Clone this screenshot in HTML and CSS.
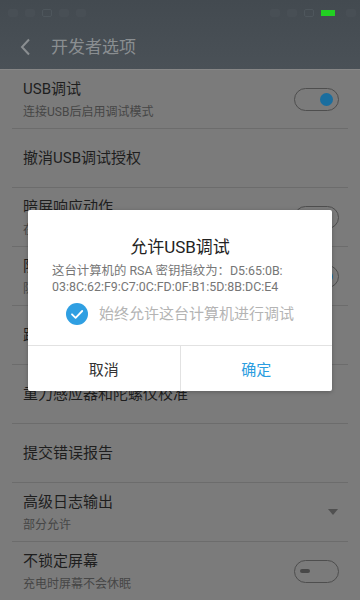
FILE: index.html
```html
<!DOCTYPE html>
<html lang="zh-CN">
<head>
<meta charset="utf-8">
<title>开发者选项</title>
<link rel="stylesheet" href="styles.css">
</head>
<body>
<div class="screen">
  <header class="appbar">
    <div class="statusbar">
      <div class="sb-left">
        <span class="sb-ico"></span><span class="sb-ico"></span><span class="sb-ico sq"></span><span class="sb-ico"></span><span class="sb-ico"></span>
      </div>
      <div class="sb-right">
        <span class="sb-ico"></span><span class="sb-ico"></span><span class="sb-ico sq"></span>
        <span class="battery"></span>
        <span class="sb-ico"></span>
      </div>
    </div>
    <div class="toolbar">
      <svg class="back" width="12" height="18" viewBox="0 0 12 18"><path d="M10 1.5 L3 9 L10 16.5" fill="none" stroke="#8a8e91" stroke-width="2"/></svg>
      <span class="title">开发者选项</span>
    </div>
  </header>

  <ul class="list">
    <li class="row">
      <div class="texts"><div class="t">USB调试</div><div class="s">连接USB后启用调试模式</div></div>
      <span class="switch on"></span>
    </li>
    <li class="row">
      <div class="texts"><div class="t">撤消USB调试授权</div></div>
    </li>
    <li class="row">
      <div class="texts"><div class="t">暗屏响应动作</div><div class="s">在暗屏状态下响应手势动作</div></div>
      <span class="switch"></span>
    </li>
    <li class="row">
      <div class="texts"><div class="t">防误触模式</div><div class="s">防止口袋中误触屏幕</div></div>
      <span class="switch on"></span>
    </li>
    <li class="row">
      <div class="texts"><div class="t">跳过开机向导</div></div>
    </li>
    <li class="row">
      <div class="texts"><div class="t">重力感应器和陀螺仪校准</div></div>
    </li>
    <li class="row">
      <div class="texts"><div class="t">提交错误报告</div></div>
    </li>
    <li class="row">
      <div class="texts"><div class="t">高级日志输出</div><div class="s">部分允许</div></div>
      <span class="caret"></span>
    </li>
    <li class="row">
      <div class="texts"><div class="t">不锁定屏幕</div><div class="s">充电时屏幕不会休眠</div></div>
      <span class="switch off"></span>
    </li>
  </ul>

  <div class="overlay">
    <div class="dialog">
      <div class="d-title">允许USB调试</div>
      <div class="d-body">这台计算机的 RSA 密钥指纹为：D5:65:0B:<br>03:8C:62:F9:C7:0C:FD:0F:B1:5D:8B:DC:E4</div>
      <div class="d-check">
        <svg class="check" width="22" height="22" viewBox="0 0 22 22"><circle cx="11" cy="11" r="11" fill="#2f9fe2"/><path d="M6 11.3 L9.6 14.8 L16.2 8" fill="none" stroke="#fff" stroke-width="1.8" stroke-linecap="round" stroke-linejoin="round"/></svg>
        <span class="check-label">始终允许这台计算机进行调试</span>
      </div>
      <div class="d-buttons">
        <div class="btn">取消</div>
        <div class="btn primary">确定</div>
      </div>
    </div>
  </div>
</div>
</body>
</html>
```

FILE: styles.css
```css
* { box-sizing: border-box; }
html, body { margin: 0; padding: 0; }
body {
  width: 360px;
  height: 600px;
  overflow: hidden;
  background: #7b7b7b;
  font-family: Roboto, "Noto Sans CJK SC", sans-serif;
}
.screen { position: relative; width: 360px; height: 600px; overflow: hidden; }

.appbar {
  background: linear-gradient(#434a50, #4a5157);
  border-bottom: 1px solid #868686;
}
.statusbar {
  height: 25px;
  display: flex;
  justify-content: space-between;
  align-items: center;
  padding: 0 4px 0 8px;
}
.sb-left, .sb-right { display: flex; align-items: center; gap: 7px; }
.sb-ico { width: 10px; height: 8px; border-radius: 2px; background: #484f55; }
.sb-ico.sq { border: 1px solid #4e565c; background: transparent; }
.battery { width: 14px; height: 6px; background: #22cf22; margin-right: 4px; }

.toolbar {
  height: 44px;
  display: flex;
  align-items: center;
  padding-left: 19px;
}
.back { display: block; margin-right: 20px; }
.title { font-size: 17px; color: #8a8e91; line-height: 22px; }

.list { list-style: none; margin: 0; padding: 0; }
.row {
  height: 59px;
  margin: 0 12px;
  padding: 0 9px 0 11px;
  border-bottom: 1px solid #6c6c6c;
  display: flex;
  align-items: center;
  justify-content: space-between;
}
.t { font-size: 15px; line-height: 20px; color: #1e1e1e; }
.s { font-size: 12px; line-height: 16px; color: #464646; margin-top: 5px; }

.switch {
  position: relative;
  width: 45px;
  height: 23px;
  border: 1px solid #4e4e4e;
  border-radius: 12px;
  flex: none;
}
.switch.on::after {
  content: "";
  position: absolute;
  right: 5px;
  top: 4px;
  width: 13px;
  height: 13px;
  border-radius: 50%;
  background: #1a6e9f;
}
.switch.off::after {
  content: "";
  position: absolute;
  left: 5px;
  top: 8px;
  width: 10px;
  height: 4px;
  border-radius: 2px;
  background: #484848;
}
.caret {
  width: 0; height: 0;
  border-left: 5px solid transparent;
  border-right: 5px solid transparent;
  border-top: 6px solid #505050;
  margin-right: 1px;
  flex: none;
}

.overlay {
  position: absolute;
  inset: 0;
  display: flex;
  align-items: center;
  justify-content: center;
}
.dialog {
  width: 304px;
  height: 181px;
  background: #ffffff;
  border-radius: 2px;
  box-shadow: 0 1px 4px rgba(0,0,0,0.25);
  display: flex;
  flex-direction: column;
  padding-top: 26px;
}
.d-title {
  text-align: center;
  font-size: 17px;
  line-height: 22px;
  color: #222;
}
.d-body {
  margin-top: 5px;
  padding: 0 20px 0 24px;
  font-size: 12.4px;
  line-height: 16px;
  color: #767676;
  white-space: nowrap;
}
.d-check {
  margin-top: 8px;
  display: flex;
  align-items: center;
  justify-content: center;
  gap: 11px;
  height: 22px;
}
.check { display: block; flex: none; }
.check-label { font-size: 15px; color: #b4b4b4; line-height: 20px; }
.d-buttons {
  margin-top: auto;
  height: 46px;
  border-top: 1px solid #e2e2e2;
  display: flex;
}
.btn {
  flex: 1;
  display: flex;
  align-items: center;
  justify-content: center;
  font-size: 15px;
  color: #333;
}
.btn + .btn { border-left: 1px solid #e2e2e2; }
.btn.primary { color: #2a9de0; }
```
